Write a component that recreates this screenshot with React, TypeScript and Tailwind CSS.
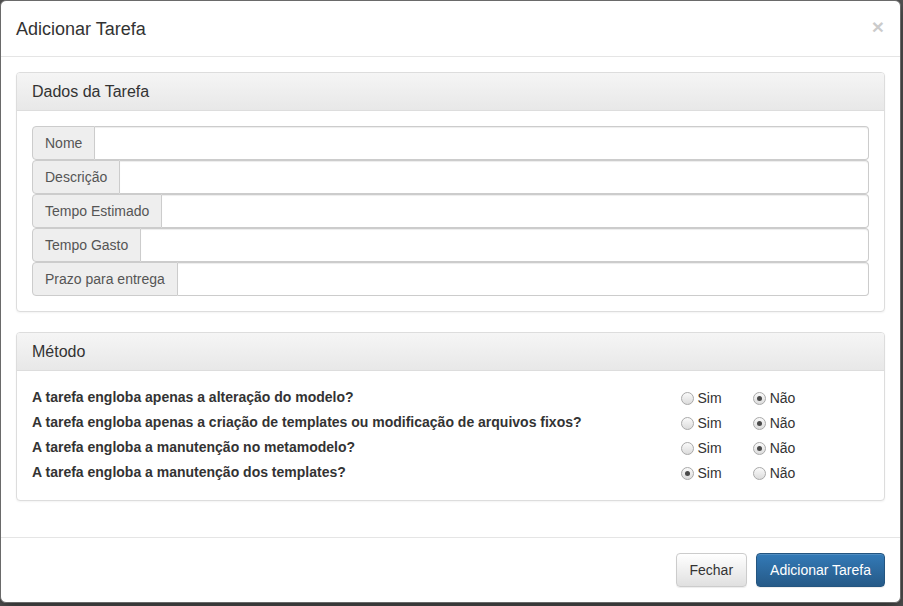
import { ReactNode } from "react"

const fields = ["Nome", "Descrição", "Tempo Estimado", "Tempo Gasto", "Prazo para entrega"]

const questions = [
    { text: "A tarefa engloba apenas a alteração do modelo?", sim: false },
    { text: "A tarefa engloba apenas a criação de templates ou modificação de arquivos fixos?", sim: false },
    { text: "A tarefa engloba a manutenção no metamodelo?", sim: false },
    { text: "A tarefa engloba a manutenção dos templates?", sim: true },
]

const Radio = ({ checked, label }: { checked: boolean, label: string }) => (
    <label className="flex items-center">
        <span className="w-[13px] h-[13px] rounded-full border border-[#a9a9a9] bg-gradient-to-b from-[#fafafa] to-[#dcdcdc] flex items-center justify-center mr-[4px]">
            {checked && <span className="w-[5px] h-[5px] rounded-full bg-[#4a4a4a]"></span>}
        </span>
        <span>{label}</span>
    </label>
)

const Panel = ({ title, children }: { title: string, children: ReactNode }) => (
    <div className="border border-[#ddd] rounded-[4px] shadow-[0_1px_2px_rgba(0,0,0,0.05)] bg-white">
        <div className="h-[38px] px-[15px] flex items-center rounded-t-[3px] border-b border-[#ddd] bg-gradient-to-b from-[#f5f5f5] to-[#e8e8e8] text-[16px] text-[#333]">
            {title}
        </div>
        <div className="p-[15px]">
            {children}
        </div>
    </div>
)

const App = () => {
    return (
        <div className="w-[903px] h-[606px] bg-[#555] font-['Liberation_Sans',Arial,sans-serif] text-[14px] text-[#333]">

            <div className="w-[901px] h-[603px] bg-white border border-[#6a6a6a] rounded-[6px] flex flex-col shadow-[0_5px_15px_rgba(0,0,0,0.5)]">

                <div className="h-[56px] px-[15px] flex items-center justify-between border-b border-[#e5e5e5]">
                    <h4 className="text-[18px] text-[#333] leading-[26px]">Adicionar Tarefa</h4>
                    <button className="text-[21px] font-bold text-black opacity-20 leading-none mr-[1px] -mt-[4px]">×</button>
                </div>

                <div className="p-[15px] flex flex-col gap-[20px]">

                    <Panel title="Dados da Tarefa">
                        <div className="flex flex-col">
                            {fields.map((f, i) => (
                                <div key={i} className="flex h-[34px]">
                                    <span className="px-[12px] flex items-center bg-[#eee] border border-[#ccc] rounded-l-[4px] text-[#555] whitespace-nowrap">{f}</span>
                                    <div className="flex-1 border border-l-0 border-[#ccc] rounded-r-[4px] shadow-[inset_0_1px_1px_rgba(0,0,0,0.075)]"></div>
                                </div>
                            ))}
                        </div>
                    </Panel>

                    <Panel title="Método">
                        <div className="flex flex-col -mt-[1px] pt-[1px]">
                            {questions.map((q, i) => (
                                <div key={i} className="flex items-center h-[24.75px]">
                                    <div className="w-[634.5px] font-bold -mt-[1px]">{q.text}</div>
                                    <div className="flex items-center pl-[14px] gap-[31px] mt-[1px]">
                                        <Radio checked={q.sim} label="Sim" />
                                        <Radio checked={!q.sim} label="Não" />
                                    </div>
                                </div>
                            ))}
                        </div>
                    </Panel>

                </div>

                <div className="mt-auto border-t border-[#e5e5e5] p-[15px] flex justify-end gap-[9px]">
                    <button className="h-[34px] px-[13px] rounded-[4px] border border-[#ccc] bg-gradient-to-b from-white to-[#e0e0e0] text-[#333] shadow-[inset_0_1px_0_rgba(255,255,255,0.15),0_1px_1px_rgba(0,0,0,0.075)]">Fechar</button>
                    <button className="h-[34px] px-[13px] rounded-[4px] border border-[#245580] bg-gradient-to-b from-[#337ab7] to-[#265a88] text-white shadow-[inset_0_1px_0_rgba(255,255,255,0.15),0_1px_1px_rgba(0,0,0,0.075)]">Adicionar Tarefa</button>
                </div>

            </div>

        </div>
    )
}

export default App
